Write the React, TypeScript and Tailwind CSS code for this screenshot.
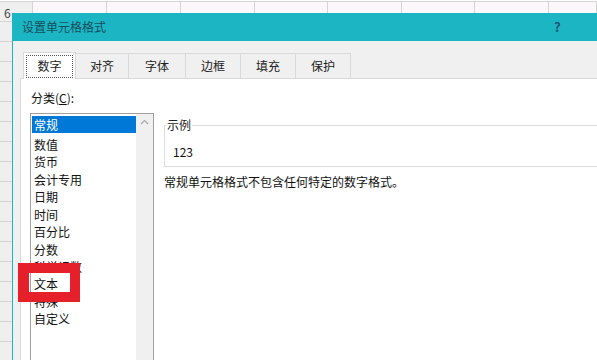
import React from "react";

const font = { fontFamily: '"Microsoft YaHei UI", "Noto Sans CJK SC", sans-serif' };

const tabs = [
  { label: "数字", w: "w-[53px]" },
  { label: "对齐", w: "w-[53px]" },
  { label: "字体", w: "w-[57px]" },
  { label: "边框", w: "w-[55px]" },
  { label: "填充", w: "w-[55px]" },
  { label: "保护", w: "w-[55px]" },
];

const categories = ["常规", "数值", "货币", "会计专用", "日期", "时间", "百分比", "分数", "科学记数", "文本", "特殊", "自定义"];

const colWidths = ["w-[74px]", "w-[74px]", "w-[74px]", "w-[73px]", "w-[74px]", "w-[73px]", "w-[74px]", "w-[48px]"];

function Sheet() {
  return (
    <div className="flex flex-col border-t border-[#d4d4d4] mt-px">
      <div className="flex h-[20px] border-b border-[#d4d4d4]">
        <div className="w-[33px] shrink-0 bg-[#efefef] border-r border-[#d4d4d4] text-[12px] leading-none pl-[4px] pt-[5px] text-[#444]">
          6
        </div>
        {colWidths.map((w, i) => (
          <div key={i} className={`${w} shrink-0 border-r border-[#d4d4d4] bg-[#fbf7fb]`} />
        ))}
      </div>
      {Array.from({ length: 17 }).map((_, r) => (
        <div key={r} className="flex h-[20px]">
          <div className="w-[33px] shrink-0 bg-[#efefef] border-r border-b border-[#d4d4d4]" />
        </div>
      ))}
    </div>
  );
}

export default function App() {
  return (
    <div className="relative w-[597px] h-[360px] overflow-hidden bg-white" style={font}>
      <Sheet />

      {/* dialog window */}
      <div className="absolute left-[12px] top-[13px] w-[600px] h-[360px] border-l border-[#1cb5c4] bg-[#f0f0f0] flex flex-col">
        <div className="h-[32px] bg-[#1cb5c4] flex items-center pl-[9px] text-[12px] text-[#154f5c]">
          <span>设置单元格格式</span>
          <span className="ml-[448px] font-bold text-[13px] text-[#1d5870]">?</span>
        </div>

        <div className="flex-1 pl-[7px] pt-[10px] flex flex-col">
          <div className="flex items-end h-[27px] pl-[3px]">
            {tabs.map((t, i) =>
              i === 0 ? (
                <div
                  key={t.label}
                  className={`${t.w} h-[27px] bg-white border border-b-0 border-[#d9d9d9] flex items-center justify-center -mb-px relative z-10`}
                >
                  <div className="w-[47px] h-[23px] border border-dotted border-[#555] flex items-center justify-center text-[12px] text-[#222]">
                    {t.label}
                  </div>
                </div>
              ) : (
                <div
                  key={t.label}
                  className={`${t.w} h-[25px] bg-[#f0f0f0] border border-l-0 border-b-0 border-[#d9d9d9] flex items-center justify-center text-[12px] text-[#222]`}
                >
                  {t.label}
                </div>
              )
            )}
          </div>

          <div className="flex-1 bg-white border-l border-t border-[#d9d9d9] pt-[11px] pl-[2px] text-[12px] text-[#111]">
            <div className="leading-[16px] pl-[8px]">
              分类(<span className="underline">C</span>):
            </div>
            <div className="flex mt-[7px]">
              <div className="w-[124px] h-[260px] border border-[#a0a0a0] ml-[7px] flex shrink-0 bg-white">
                <div className="flex-1 pt-[2px] pl-px">
                  {categories.map((c, i) => (
                    <div
                      key={c}
                      className={`h-[17.45px] leading-[17px] pl-[2px] ${
                        i === 0 ? "bg-[#0078d7] text-white h-[15px] leading-[15px] mb-[2.45px]" : ""
                      }`}
                    >
                      {c}
                    </div>
                  ))}
                </div>
                <div className="w-[17px] bg-[#f0f0f0] flex justify-center pt-[5px]">
                  <svg width="9" height="6" viewBox="0 0 9 6">
                    <path d="M1 5 L4.5 1.5 L8 5" fill="none" stroke="#a6a6a6" strokeWidth="1.2" />
                  </svg>
                </div>
              </div>

              <div className="flex-1 ml-[10px] flex flex-col">
                <div className="relative border border-[#dcdcdc] border-r-0 h-[42px] mt-[12px] pl-[8px] pt-[18px] leading-[16px]">
                  <span className="absolute -top-[9px] left-[1px] bg-white px-px leading-[16px] text-[#222]">示例</span>
                  123
                </div>
                <div className="mt-[7px] leading-[16px]">常规单元格格式不包含任何特定的数字格式。</div>
              </div>
            </div>
          </div>
        </div>
      </div>

      {/* red highlight annotation */}
      <div className="absolute left-[18px] top-[263px] w-[62px] h-[39px] border-[10px] border-l-[11px] border-[#e5202b]" />
    </div>
  );
}
